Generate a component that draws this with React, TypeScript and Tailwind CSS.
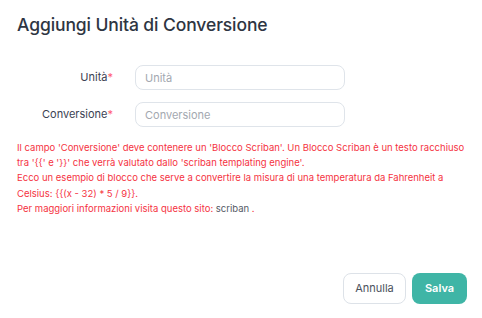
const font = { fontFamily: "Inter, 'Noto Sans', sans-serif" };

const line1 =
  "Il campo 'Conversione' deve contenere un 'Blocco Scriban'. Un Blocco Scriban è un testo racchiuso tra '{{' e '}}' che verrà valutato dallo 'scriban templating engine'.";
const line2 =
  "Ecco un esempio di blocco che serve a convertire la misura di una temperatura da Fahrenheit a Celsius: {{(x - 32) * 5 / 9}}.";

function Field({ label, placeholder }: { label: string; placeholder: string }) {
  return (
    <div className="flex items-center">
      <label className="w-[96px] text-right text-[11px] text-[#3b4252]">
        {label}
        <span className="text-[#ff5a6e]">*</span>
      </label>
      <input
        placeholder={placeholder}
        className="ml-[22px] h-[25px] w-[210px] rounded-[8px] border border-[#dfe4ea] bg-white px-[9px] text-[11px] text-[#374151] placeholder:text-[#a3a8b0] outline-none"
      />
    </div>
  );
}

export default function App() {
  return (
    <div className="h-[318px] w-[482px] bg-white text-[#2d3340]" style={font}>
      <div className="flex h-full flex-col px-[17px]">
        <h1 className="pt-[13px] text-[17.5px] font-medium leading-[24px] tracking-[-0.1px] text-[#2e3542]">
          Aggiungi Unità di Conversione
        </h1>
        <div className="mt-[28px] flex flex-col gap-[12px]">
          <Field label="Unità" placeholder="Unità" />
          <Field label="Conversione" placeholder="Conversione" />
        </div>
        <div className="mt-[13px] text-[9.5px] leading-[15.2px] text-[#f5333f]">
          <p>{line1}</p>
          <p>{line2}</p>
          <p>
            Per maggiori informazioni visita questo sito: <span className="text-[#555b66]">scriban</span> .
          </p>
        </div>
        <div className="mt-auto mb-[14px] mr-[-2px] flex justify-end gap-[6px]">
          <button className="h-[31px] w-[63px] rounded-[8px] border border-[#dde2e8] bg-white text-[11px] text-[#4b515c]">
            Annulla
          </button>
          <button className="h-[31px] w-[55px] rounded-[8px] bg-[#3fb5a6] text-[11px] font-semibold text-white">
            Salva
          </button>
        </div>
      </div>
    </div>
  );
}
